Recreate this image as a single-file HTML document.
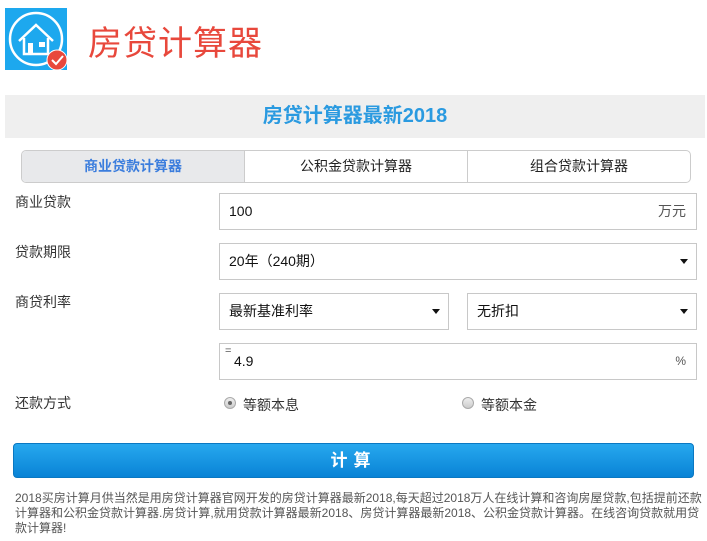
<!DOCTYPE html>
<html><head><meta charset="utf-8"><style>
*{margin:0;padding:0;box-sizing:border-box}
body{width:707px;height:541px;background:#fff;font-family:"Liberation Sans","Noto Sans CJK SC",sans-serif;position:relative;overflow:hidden;color:#333}
.a{position:absolute}
.title{left:88px;top:16px;font-size:34px;color:#e8483c;letter-spacing:1px}
.band{left:5px;top:95px;width:700px;height:43px;background:#efefef;text-align:center;line-height:43px;font-size:20px;font-weight:bold;color:#2a9ae0}
.tabs{left:21px;top:150px;width:670px;height:33px;border:1px solid #ccc;border-radius:5px;display:flex;overflow:hidden}
.tabs div{flex:1;text-align:center;line-height:31px;font-size:14px;color:#222;border-left:1px solid #ccc}
.tabs div:first-child{border-left:none;background:#e8e9eb;color:#3b7ddd;font-weight:bold}
.lbl{left:15px;font-size:14px;color:#333}
.box{border:1px solid #c8c8c8;height:37px;font-size:14px;line-height:35px;padding-left:9px;color:#111}
.arr{position:absolute;right:8px;top:15px;width:0;height:0;border-left:4px solid transparent;border-right:4px solid transparent;border-top:5px solid #111}
.unit{position:absolute;right:10px;top:0;color:#555}
.rad{width:12px;height:12px;border-radius:50%;border:1px solid #aaa;background:linear-gradient(#eee,#ccc)}
.rad.on::after{content:"";position:absolute;left:3px;top:3px;width:4px;height:4px;border-radius:50%;background:#666}
.btn{left:13px;top:443px;width:681px;height:35px;border-radius:4px;background:linear-gradient(#27a8ee,#0983d6);border:1px solid #0a78c2;color:#fff;font-weight:bold;font-size:17px;text-align:center;line-height:33px;letter-spacing:6px}
.foot{left:15px;top:491px;width:690px;font-size:12px;line-height:15px;color:#555}
</style></head><body>
<svg class="a" style="left:5px;top:8px" width="62" height="62" viewBox="0 0 62 62">
<rect width="62" height="62" fill="#1da8ee"/>
<circle cx="31" cy="31" r="26" fill="none" stroke="#fff" stroke-width="2.5"/>
<path d="M14 33 L31 17 L48 33" fill="none" stroke="#fff" stroke-width="2.5"/>
<path d="M19 30 V46 H43 V30" fill="none" stroke="#fff" stroke-width="2.5"/>
<rect x="23" y="35" width="5" height="11" fill="#fff"/><rect x="34" y="34" width="6" height="5" fill="#fff"/>
<circle cx="52" cy="52" r="10" fill="#e8483c" stroke="#fff" stroke-width="1"/>
<path d="M47 52 L51 56 L58 48" fill="none" stroke="#fff" stroke-width="2"/>
</svg>
<div class="a title">房贷计算器</div>
<div class="a band">房贷计算器最新2018</div>
<div class="a tabs"><div>商业贷款计算器</div><div>公积金贷款计算器</div><div>组合贷款计算器</div></div>
<div class="a lbl" style="top:192px">商业贷款</div>
<div class="a lbl" style="top:242px">贷款期限</div>
<div class="a lbl" style="top:292px">商贷利率</div>
<div class="a lbl" style="top:393px">还款方式</div>
<div class="a box" style="left:219px;top:193px;width:478px">100<span class="unit">万元</span></div>
<div class="a box" style="left:219px;top:243px;width:478px">20年（240期）<span class="arr"></span></div>
<div class="a box" style="left:219px;top:293px;width:230px">最新基准利率<span class="arr"></span></div>
<div class="a box" style="left:467px;top:293px;width:230px">无折扣<span class="arr"></span></div>
<div class="a box" style="left:219px;top:343px;width:478px;padding-left:14px"><span style="position:absolute;left:5px;top:-10px;font-size:11px;color:#555">=</span>4.9<span class="unit" style="font-size:12px">%</span></div>
<div class="a rad on" style="left:224px;top:397px"></div>
<div class="a" style="left:243px;top:395px;font-size:14px">等额本息</div>
<div class="a rad" style="left:462px;top:397px"></div>
<div class="a" style="left:481px;top:395px;font-size:14px">等额本金</div>
<div class="a btn">计算</div>
<div class="a foot">2018买房计算月供当然是用房贷计算器官网开发的房贷计算器最新2018,每天超过2018万人在线计算和咨询房屋贷款,包括提前还款计算器和公积金贷款计算器.房贷计算,就用贷款计算器最新2018、房贷计算器最新2018、公积金贷款计算器。在线咨询贷款就用贷款计算器!</div>
</body></html>
